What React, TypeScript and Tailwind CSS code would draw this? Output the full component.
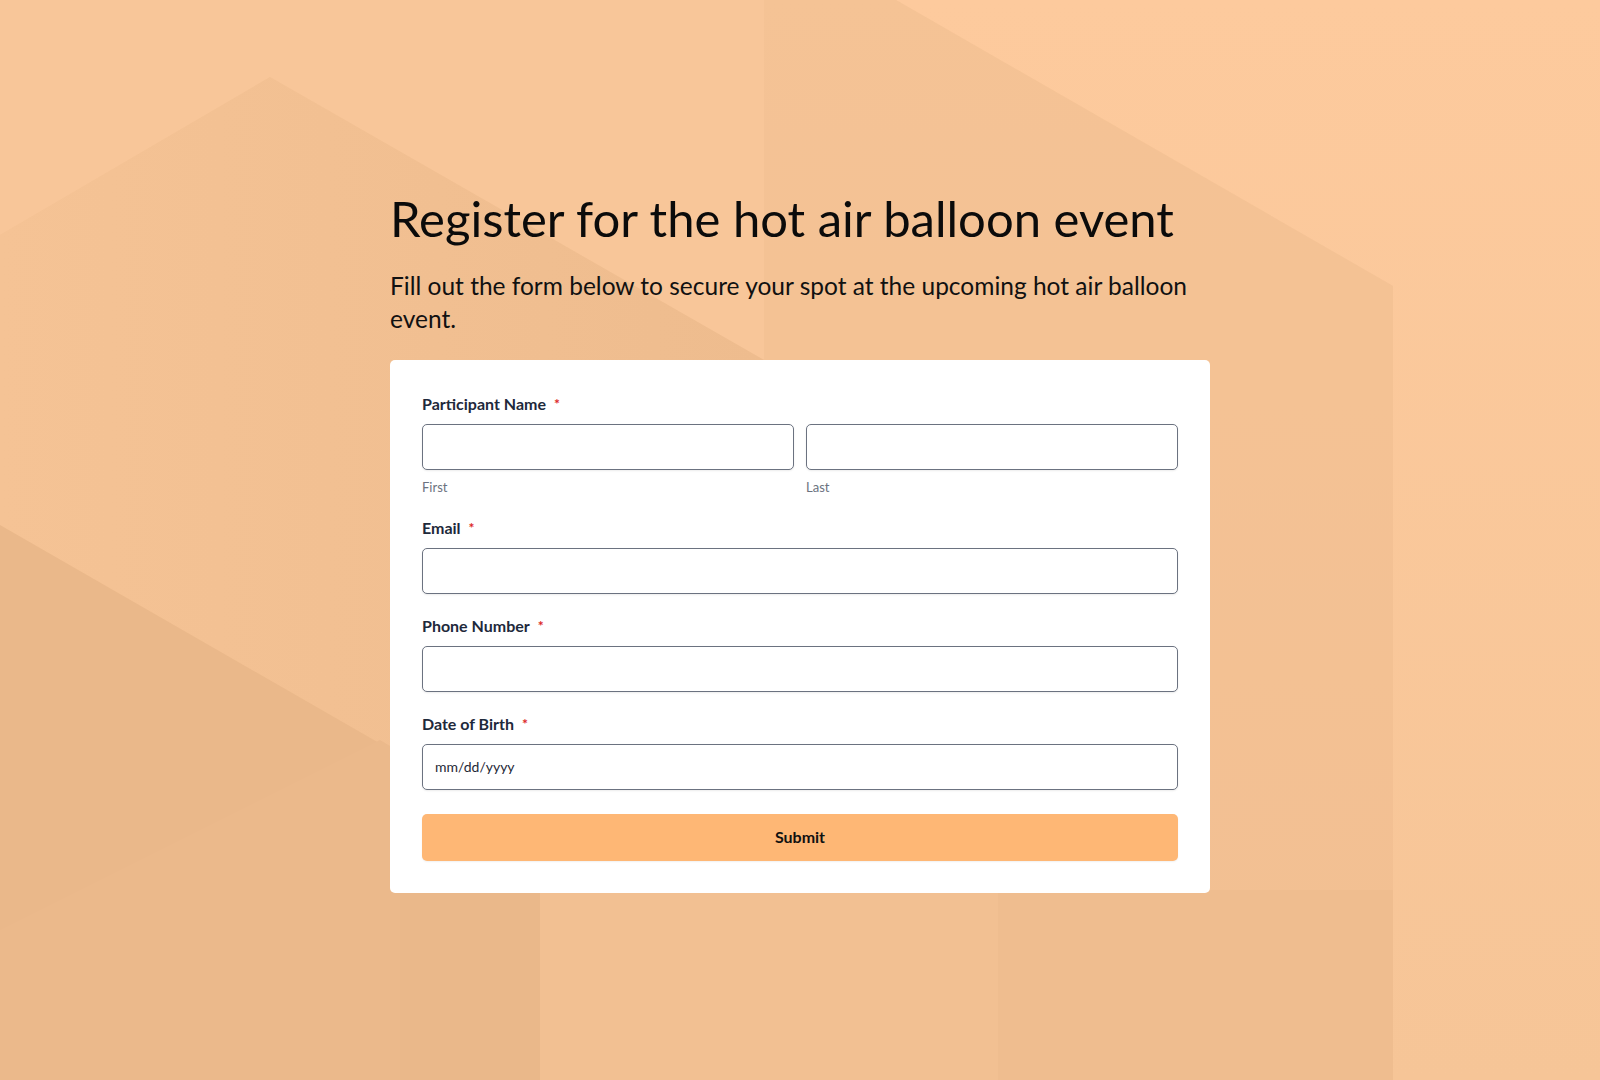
import React from 'react';

const font = { fontFamily: 'Lato, "Noto Sans", sans-serif' };

function Background() {
  return (
    <svg className="absolute inset-0 w-full h-full" viewBox="0 0 1600 1080" preserveAspectRatio="none" aria-hidden>
      <defs>
        <linearGradient id="rightTop" x1="0" y1="0" x2="0" y2="1">
          <stop offset="0" stopColor="#fdca9d" />
          <stop offset="1" stopColor="#f6c597" />
        </linearGradient>
        <linearGradient id="mid" x1="0" y1="0" x2="0" y2="1">
          <stop offset="0" stopColor="#f7c597" />
          <stop offset="1" stopColor="#f0bd8f" />
        </linearGradient>
        <linearGradient id="leftMid" x1="0" y1="0" x2="1" y2="0">
          <stop offset="0" stopColor="#f5c395" />
          <stop offset="1" stopColor="#eebc8e" />
        </linearGradient>
      </defs>
      <rect width="1600" height="1080" fill="url(#mid)" />
      {/* top-left block */}
      <polygon points="0,0 764,0 764,360 270,77 0,235" fill="#f8c699" />
      <polygon points="0,235 270,77 764,360 764,890 0,890" fill="url(#leftMid)" />
      {/* lower left darker wedge */}
      <polygon points="0,525 400,755 400,1080 0,1080" fill="#eab88a" />
      <polygon points="0,930 380,740 400,752 400,1080 0,1080" fill="#ebb98b" />
      {/* bottom columns */}
      <polygon points="400,890 540,890 540,1080 400,1080" fill="#eab88a" />
      <polygon points="540,890 998,890 998,1080 540,1080" fill="#f2c092" />
      <polygon points="998,890 1393,890 1393,1080 998,1080" fill="#efbd8f" />
      {/* right side */}
      <polygon points="1210,0 1600,0 1600,1080 1393,1080 1393,286 896,0" fill="url(#rightTop)" />
      <polygon points="764,0 896,0 1393,286 1393,890 764,890" fill="#f4c294" opacity="0.6" />
    </svg>
  );
}

function Label({ children }: { children: React.ReactNode }) {
  return (
    <label className="flex items-center h-6 text-[16px] font-bold text-[#1e293b]">
      {children}
      <span className="ml-2 text-[14px] text-[#dc2626]">*</span>
    </label>
  );
}

function Field({ type = 'text', placeholder }: { type?: string; placeholder?: string }) {
  return (
    <input
      type={type}
      placeholder={placeholder}
      className="w-full h-[46px] rounded-[5px] border border-[#6b7280] bg-white px-3 text-[14px] text-[#1f2937] placeholder:text-[#1f2937] shadow-[0_1px_2px_rgba(0,0,0,0.08)] outline-none"
    />
  );
}

export default function App() {
  return (
    <div className="relative min-h-screen overflow-hidden bg-[#f5c293]" style={font}>
      <Background />
      <div className="relative flex justify-center pt-[189px] pb-10">
        <div className="w-[820px]">
          <h1 className="text-[49px] leading-[1.2] font-normal text-[#0b0b0b]">Register for the hot air balloon event</h1>
          <p className="mt-[21px] text-[24.5px] leading-[33px] text-[#111]">
            Fill out the form below to secure your spot at the upcoming hot air balloon event.
          </p>
          <form className="mt-[25px] bg-white rounded-[5px] p-8" onSubmit={(e) => e.preventDefault()}>
            <div>
              <Label>Participant Name</Label>
              <div className="mt-2 grid grid-cols-2 gap-3">
                <div>
                  <Field />
                  <div className="mt-2 h-[18px] text-[13px] leading-[18px] text-[#6b7280]">First</div>
                </div>
                <div>
                  <Field />
                  <div className="mt-2 h-[18px] text-[13px] leading-[18px] text-[#6b7280]">Last</div>
                </div>
              </div>
            </div>
            <div className="mt-5">
              <Label>Email</Label>
              <div className="mt-2"><Field type="email" /></div>
            </div>
            <div className="mt-5">
              <Label>Phone Number</Label>
              <div className="mt-2"><Field type="tel" /></div>
            </div>
            <div className="mt-5">
              <Label>Date of Birth</Label>
              <div className="mt-2"><Field placeholder="mm/dd/yyyy" /></div>
            </div>
            <button
              type="submit"
              className="mt-6 w-full h-[47px] rounded-[5px] bg-[#feb775] text-[16px] font-bold text-[#111] shadow-[0_1px_2px_rgba(0,0,0,0.06)]"
            >
              Submit
            </button>
          </form>
        </div>
      </div>
    </div>
  );
}
